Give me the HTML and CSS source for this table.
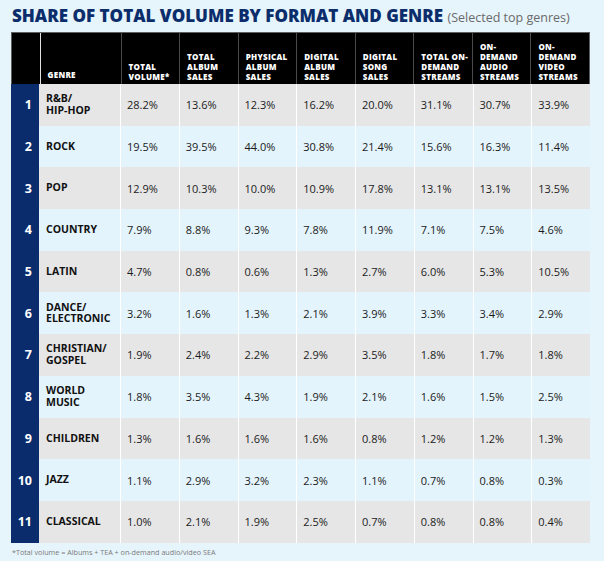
FILE: index.html
```html
<!DOCTYPE html>
<html>
<head>
<meta charset="utf-8">
<link rel="stylesheet" href="styles.css">
</head>
<body>
<div class="page">
  <h1 class="title">SHARE OF TOTAL VOLUME BY FORMAT AND GENRE <span class="sub">(Selected top genres)</span></h1>
  <div class="table">
    <div class="row head">
      <div class="c num"></div>
      <div class="c genre">GENRE</div>
      <div class="c">TOTAL<br>VOLUME*</div>
      <div class="c">TOTAL<br>ALBUM<br>SALES</div>
      <div class="c">PHYSICAL<br>ALBUM<br>SALES</div>
      <div class="c">DIGITAL<br>ALBUM<br>SALES</div>
      <div class="c">DIGITAL<br>SONG<br>SALES</div>
      <div class="c">TOTAL ON-<br>DEMAND<br>STREAMS</div>
      <div class="c">ON-<br>DEMAND<br>AUDIO<br>STREAMS</div>
      <div class="c">ON-<br>DEMAND<br>VIDEO<br>STREAMS</div>
    </div>
    <div class="row odd"><div class="c num">1</div><div class="c genre">R&amp;B/<br>HIP-HOP</div><div class="c">28.2%</div><div class="c">13.6%</div><div class="c">12.3%</div><div class="c">16.2%</div><div class="c">20.0%</div><div class="c">31.1%</div><div class="c">30.7%</div><div class="c">33.9%</div></div>
    <div class="row even"><div class="c num">2</div><div class="c genre">ROCK</div><div class="c">19.5%</div><div class="c">39.5%</div><div class="c">44.0%</div><div class="c">30.8%</div><div class="c">21.4%</div><div class="c">15.6%</div><div class="c">16.3%</div><div class="c">11.4%</div></div>
    <div class="row odd"><div class="c num">3</div><div class="c genre">POP</div><div class="c">12.9%</div><div class="c">10.3%</div><div class="c">10.0%</div><div class="c">10.9%</div><div class="c">17.8%</div><div class="c">13.1%</div><div class="c">13.1%</div><div class="c">13.5%</div></div>
    <div class="row even"><div class="c num">4</div><div class="c genre">COUNTRY</div><div class="c">7.9%</div><div class="c">8.8%</div><div class="c">9.3%</div><div class="c">7.8%</div><div class="c">11.9%</div><div class="c">7.1%</div><div class="c">7.5%</div><div class="c">4.6%</div></div>
    <div class="row odd"><div class="c num">5</div><div class="c genre">LATIN</div><div class="c">4.7%</div><div class="c">0.8%</div><div class="c">0.6%</div><div class="c">1.3%</div><div class="c">2.7%</div><div class="c">6.0%</div><div class="c">5.3%</div><div class="c">10.5%</div></div>
    <div class="row even"><div class="c num">6</div><div class="c genre">DANCE/<br>ELECTRONIC</div><div class="c">3.2%</div><div class="c">1.6%</div><div class="c">1.3%</div><div class="c">2.1%</div><div class="c">3.9%</div><div class="c">3.3%</div><div class="c">3.4%</div><div class="c">2.9%</div></div>
    <div class="row odd"><div class="c num">7</div><div class="c genre">CHRISTIAN/<br>GOSPEL</div><div class="c">1.9%</div><div class="c">2.4%</div><div class="c">2.2%</div><div class="c">2.9%</div><div class="c">3.5%</div><div class="c">1.8%</div><div class="c">1.7%</div><div class="c">1.8%</div></div>
    <div class="row even"><div class="c num">8</div><div class="c genre">WORLD<br>MUSIC</div><div class="c">1.8%</div><div class="c">3.5%</div><div class="c">4.3%</div><div class="c">1.9%</div><div class="c">2.1%</div><div class="c">1.6%</div><div class="c">1.5%</div><div class="c">2.5%</div></div>
    <div class="row odd"><div class="c num">9</div><div class="c genre">CHILDREN</div><div class="c">1.3%</div><div class="c">1.6%</div><div class="c">1.6%</div><div class="c">1.6%</div><div class="c">0.8%</div><div class="c">1.2%</div><div class="c">1.2%</div><div class="c">1.3%</div></div>
    <div class="row even"><div class="c num">10</div><div class="c genre">JAZZ</div><div class="c">1.1%</div><div class="c">2.9%</div><div class="c">3.2%</div><div class="c">2.3%</div><div class="c">1.1%</div><div class="c">0.7%</div><div class="c">0.8%</div><div class="c">0.3%</div></div>
    <div class="row odd"><div class="c num">11</div><div class="c genre">CLASSICAL</div><div class="c">1.0%</div><div class="c">2.1%</div><div class="c">1.9%</div><div class="c">2.5%</div><div class="c">0.7%</div><div class="c">0.8%</div><div class="c">0.8%</div><div class="c">0.4%</div></div>
  </div>
  <p class="note">*Total volume = Albums + TEA + on-demand audio/video SEA</p>
</div>
</body>
</html>
```
FILE: styles.css
```css
html, body {
  margin: 0;
  padding: 0;
  background: #e6f4fb;
}
.page {
  width: 604px;
  height: 561px;
  padding: 5px 0 0 11px;
  box-sizing: border-box;
  font-family: "Open Sans", "Liberation Sans", sans-serif;
}
.title {
  margin: 0 0 3px 1px;
  font-size: 17px;
  line-height: 22px;
  font-weight: 800;
  color: #0b2d6b;
  letter-spacing: 0;
  white-space: nowrap;
}
.sub {
  font-size: 12.5px;
  font-weight: 400;
  color: #6a6a6a;
  letter-spacing: 0;
}
.table {
  width: 579px;
}
.row {
  display: grid;
  grid-template-columns: 28px 81px repeat(8, 1fr);
}
.c {
  box-sizing: border-box;
  border-left: 1.5px solid #ffffff;
  padding-left: 6px;
  display: flex;
  align-items: center;
  font-size: 11px;
  color: #1b1b1b;
}
.c.num {
  border-left: none;
  background: #0a2c6c;
  color: #ffffff;
  font-weight: 700;
  font-size: 12.5px;
  justify-content: flex-end;
  padding: 0 7px 0 0;
}
.c.genre {
  border-left: none;
  font-weight: 700;
  font-size: 10.5px;
  line-height: 11.5px;
  color: #111111;
  padding-left: 7px;
}
.row.odd, .row.odd .c {
  height: 41.7px;
}
.row.even, .row.even .c {
  height: 41.7px;
}
.row.odd .c:not(.num) {
  background: #e6e6e6;
}
.row.even .c:not(.num) {
  background: #e4f4fc;
}
.row.head {
  height: 52px;
  background: #000000;
  border-top: 1.5px solid #5e5e5e;
  border-right: 1.5px solid #5e5e5e;
  border-left: 1.5px solid #5e5e5e;
  box-sizing: border-box;
  margin-left: -0.5px;
}
.row.head .c {
  height: 50.5px;
  background: #000000;
  border-left: 1px solid #4a4a4a;
  align-items: flex-end;
  color: #ffffff;
  font-weight: 800;
  font-size: 8px;
  line-height: 10px;
  letter-spacing: 0.3px;
  padding: 0 0 2px 7px;
}
.row.head .c.num {
  border-left: none;
}
.row.head .c.genre {
  border-left: 1px solid #e0e0e0;
  padding-bottom: 4px;
}
.note {
  margin: 4px 0 0 1px;
  font-size: 7.2px;
  color: #7a7a7a;
}
```
